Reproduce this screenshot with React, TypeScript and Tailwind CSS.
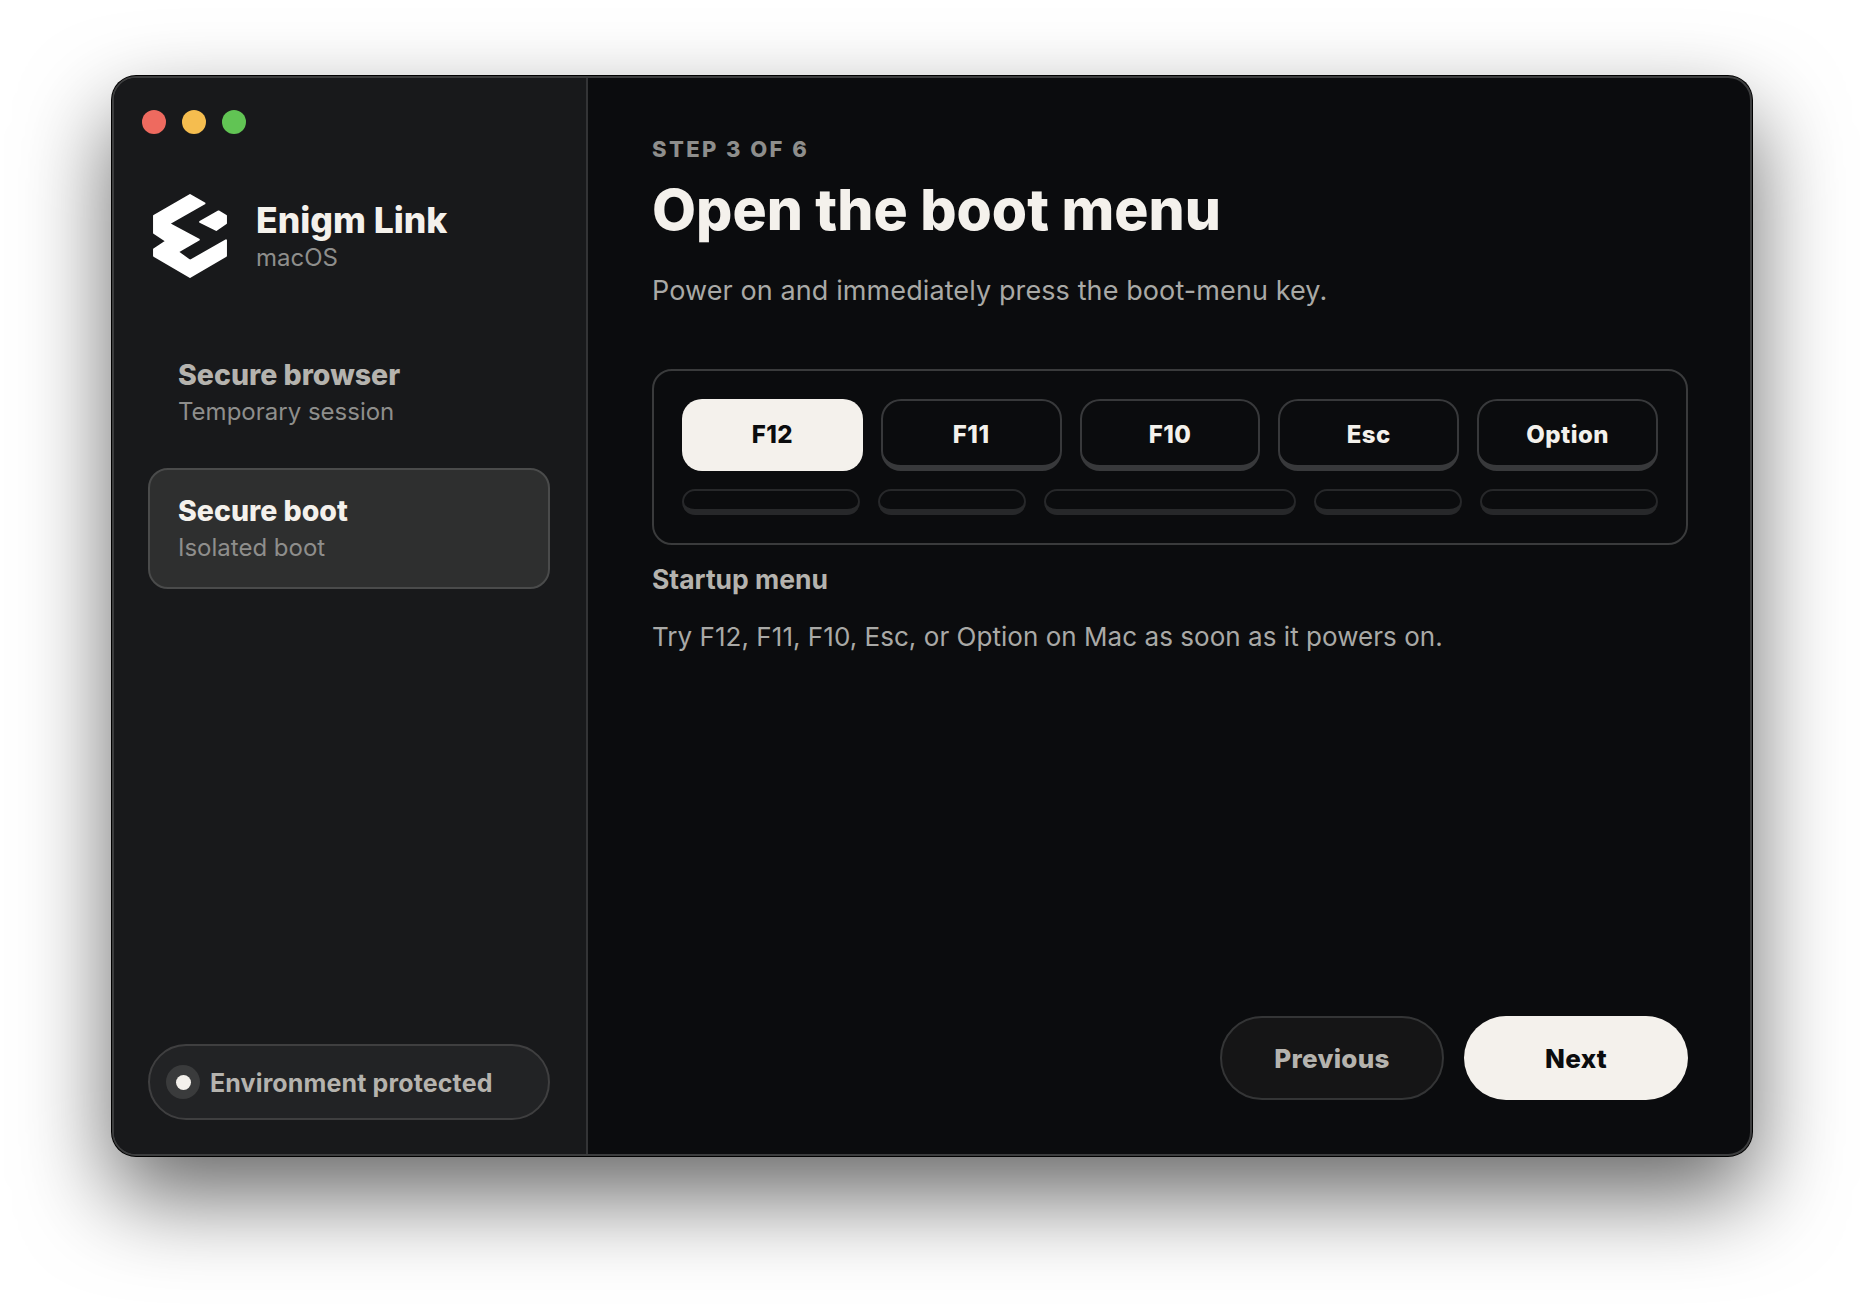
const keys = ['F12', 'F11', 'F10', 'Esc', 'Option']

function Logo() {
  return (
    <svg viewBox="70 42 220 250" className="h-[84px] w-[74px] shrink-0" aria-hidden="true">
      <g fill="#ffffff" stroke="#ffffff" strokeWidth="6" strokeLinejoin="round">
        <path d="M180 45 L223 70 L117 130 L206 178 L143 214 L180 241 L287 180 L287 226 L180 289 L73 226 L73 207 L110 182 L73 158 L73 107 Z" />
        <path d="M210 125 L265 94 L287 107 L287 129 L258 149 Z" />
      </g>
    </svg>
  )
}

function NavItem({ title, sub, active }: { title: string; sub: string; active?: boolean }) {
  return (
    <div
      className={
        active
          ? 'flex h-[121px] flex-col justify-center rounded-[20px] border-2 border-[#4a4b4b] bg-[#2e2f2f] pl-[28px]'
          : 'flex h-[121px] flex-col justify-center rounded-[20px] border-2 border-transparent pl-[28px]'
      }
    >
      <div
        className={
          active
            ? 'text-[28.5px] leading-[36px] font-extrabold text-[#f4f1ec]'
            : 'text-[28.5px] leading-[36px] font-extrabold text-[#b5b3ae]'
        }
      >
        {title}
      </div>
      <div className="mt-[3px] text-[24px] leading-[32px] text-[#8e8e8c]">{sub}</div>
    </div>
  )
}

export default function App() {
  return (
    <div className="flex min-h-[1304px] justify-center bg-white pt-[76px] font-['Inter',sans-serif]">
      <div className="flex h-[1080px] w-[1640px] overflow-hidden rounded-[24px] border-2 border-[#3c3d3e] bg-[#0b0c0e] shadow-[0_0_0_1px_#000,0_40px_90px_rgba(0,0,0,0.6)]">
        <aside className="flex w-[474px] shrink-0 flex-col border-r-2 border-[#333436] bg-[#18191b] pr-[36px] pb-[34px] pl-[34px]">
          <div className="mt-[32px] -ml-[6px] flex gap-[16px]">
            <span className="h-[24px] w-[24px] rounded-full bg-[#ee6a5f]" />
            <span className="h-[24px] w-[24px] rounded-full bg-[#f5bd4f]" />
            <span className="h-[24px] w-[24px] rounded-full bg-[#61c454]" />
          </div>
          <div className="mt-[60px] flex items-center gap-[30px] pl-[5px]">
            <Logo />
            <div className="-ml-[1px] pt-[1px]">
              <div className="text-[35.5px] leading-[42px] font-extrabold text-[#f4f1ec]">Enigm Link</div>
              <div className="mt-[1px] text-[24px] leading-[30px] text-[#8e8e8c]">macOS</div>
            </div>
          </div>
          <nav className="mt-[54px] flex flex-col gap-[15px]">
            <NavItem title="Secure browser" sub="Temporary session" />
            <NavItem title="Secure boot" sub="Isolated boot" active />
          </nav>
          <div className="mt-auto flex h-[76px] items-center gap-[10px] rounded-full border-2 border-[#3f3f40] bg-[#222325] pl-[16px]">
            <span className="flex h-[34px] w-[34px] items-center justify-center rounded-full bg-[#3a3b3c]">
              <span className="h-[15px] w-[15px] rounded-full bg-[#f4f1ec]" />
            </span>
            <span className="pt-[1px] text-[25px] leading-[32px] font-bold tracking-[0.14px] text-[#b5b3ae]">
              Environment protected
            </span>
          </div>
        </aside>

        <main className="flex flex-1 flex-col pr-[62px] pb-[54px] pl-[64px]">
          <div className="mt-[57px] text-[22px] leading-[28px] font-extrabold tracking-[0.11em] text-[#8e8e8c]">
            STEP 3 OF 6
          </div>
          <h1 className="mt-[13px] text-[57px] leading-[68px] font-extrabold text-[#f4f1ec]">
            Open the boot menu
          </h1>
          <p className="mt-[29px] text-[27px] leading-[36px] tracking-[0.1px] text-[#a9a9a6]">
            Power on and immediately press the boot-menu key.
          </p>

          <div className="mt-[60px] flex h-[176px] flex-col gap-[18px] rounded-[20px] border-2 border-[#3a3b3c] px-[28px] pt-[28px]">
            <div className="grid grid-cols-5 gap-[18px]">
              {keys.map((k, i) =>
                i === 0 ? (
                  <div
                    key={k}
                    className="flex h-[72px] items-center justify-center rounded-[20px] bg-[#f4f1ec] text-[24px] font-extrabold tracking-[0.02em] text-[#0b0c0e]"
                  >
                    {k}
                  </div>
                ) : (
                  <div
                    key={k}
                    className="flex h-[72px] items-center justify-center rounded-[20px] border-2 border-b-[6px] border-[#38393b] pt-[4px] text-[24px] font-extrabold tracking-[0.02em] text-[#f4f1ec]"
                  >
                    {k}
                  </div>
                ),
              )}
            </div>
            <div className="grid grid-cols-[1.2fr_1fr_1.7fr_1fr_1.2fr] gap-[18px]">
              {keys.map((k) => (
                <div key={k} className="h-[26px] rounded-full border-2 border-b-[6px] border-[#27282a]" />
              ))}
            </div>
          </div>

          <div className="mt-[18px] text-[26.5px] leading-[32px] font-bold text-[#b5b3ae]">Startup menu</div>
          <p className="mt-[24px] text-[26px] leading-[36px] tracking-[0.04px] text-[#a9a9a6]">
            Try F12, F11, F10, Esc, or Option on Mac as soon as it powers on.
          </p>

          <div className="mt-auto flex justify-end gap-[20px]">
            <button className="h-[84px] w-[224px] rounded-full border-2 border-[#343536] bg-[#151516] pt-[1px] text-[26px] font-extrabold tracking-[0.01em] text-[#b5b3ae]">
              Previous
            </button>
            <button className="h-[84px] w-[224px] rounded-full bg-[#f4f1ec] pt-[1px] text-[26px] font-extrabold tracking-[0.01em] text-[#0b0c0e]">
              Next
            </button>
          </div>
        </main>
      </div>
    </div>
  )
}
